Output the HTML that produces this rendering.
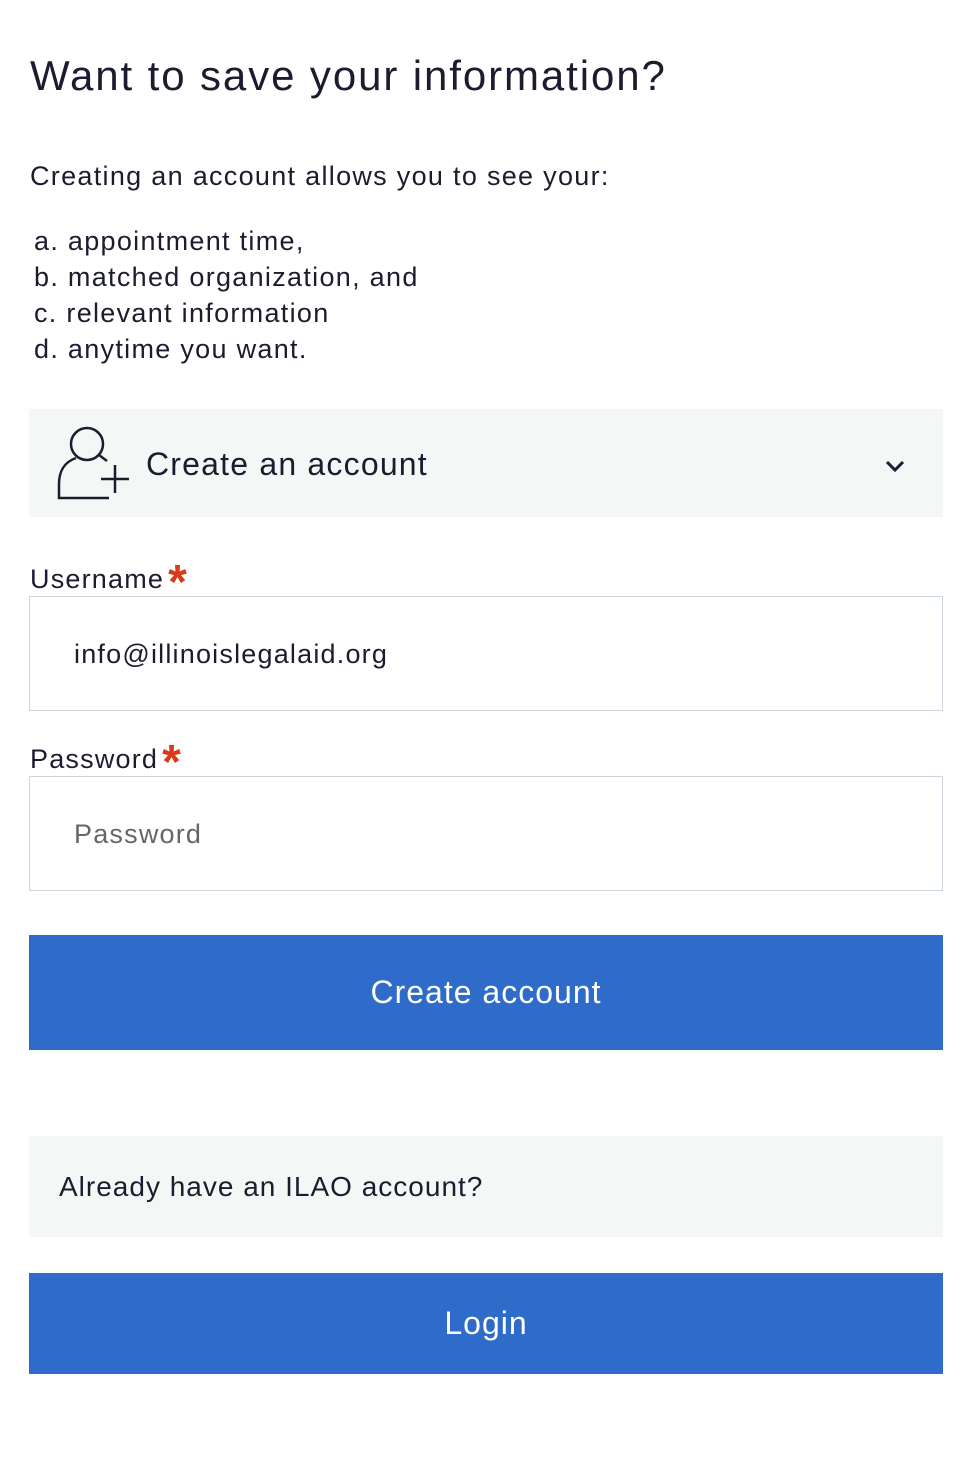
<!DOCTYPE html>
<html><head><style>
body{margin:0;background:#fff;font-family:"Liberation Sans",sans-serif;color:#1b1d2f;width:980px;height:1468px;position:relative;overflow:hidden}
.a{position:absolute;white-space:nowrap}
.s{color:#d93a1a;font-size:48px;font-weight:bold;vertical-align:-10px;margin-left:4px;line-height:0}
</style></head><body>
<div class="a" style="left:30px;top:50px;font-size:42px;line-height:52px;letter-spacing:1.9px">Want to save your information?</div>
<div class="a" style="left:30px;top:158px;font-size:27px;line-height:36px;letter-spacing:1.3px">Creating an account allows you to see your:</div>
<div class="a" style="left:34px;top:223px;font-size:27px;line-height:36px;letter-spacing:1.3px">a. appointment time,<br>b. matched organization, and<br>c. relevant information<br>d. anytime you want.</div>
<div class="a" style="left:29px;top:409px;width:914px;height:108px;background:#f5f7f7"></div>
<svg class="a" style="left:0;top:0" width="980" height="600" fill="none" stroke="#1b1d2f" stroke-width="2.5">
<circle cx="87" cy="444" r="16"/>
<path d="M99 455 L107 461"/>
<path d="M76 458 C64 462 59 472 59 484 V498 H109"/>
<path d="M101 479 H129 M115 465 V493"/>
<path d="M887 462 L895 470 L903 462" stroke-width="3"/>
</svg>
<div class="a" style="left:146px;top:444px;font-size:32px;line-height:40px;letter-spacing:1.2px">Create an account</div>
<div class="a" style="left:30px;top:562px;font-size:27px;line-height:34px;letter-spacing:1.2px">Username<span class="s">*</span></div>
<div class="a" style="left:29px;top:596px;width:912px;height:113px;border:1px solid #cdd6de"></div>
<div class="a" style="left:74px;top:637px;font-size:27px;line-height:34px;letter-spacing:1.2px">info@illinoislegalaid.org</div>
<div class="a" style="left:30px;top:742px;font-size:27px;line-height:34px;letter-spacing:1.2px">Password<span class="s">*</span></div>
<div class="a" style="left:29px;top:776px;width:912px;height:113px;border:1px solid #cdd6de"></div>
<div class="a" style="left:74px;top:817px;font-size:27px;line-height:34px;color:#666;letter-spacing:1.2px">Password</div>
<div class="a" style="left:29px;top:935px;width:914px;height:115px;background:#2f6bc8;color:#fff;font-size:32px;line-height:115px;text-align:center;letter-spacing:1px">Create account</div>
<div class="a" style="left:29px;top:1136px;width:914px;height:101px;background:#f5f7f7"></div>
<div class="a" style="left:59px;top:1170px;font-size:28px;line-height:34px;letter-spacing:1px">Already have an ILAO account?</div>
<div class="a" style="left:29px;top:1273px;width:914px;height:101px;background:#2f6bc8;color:#fff;font-size:32px;line-height:101px;text-align:center;letter-spacing:1px">Login</div>
</body></html>
